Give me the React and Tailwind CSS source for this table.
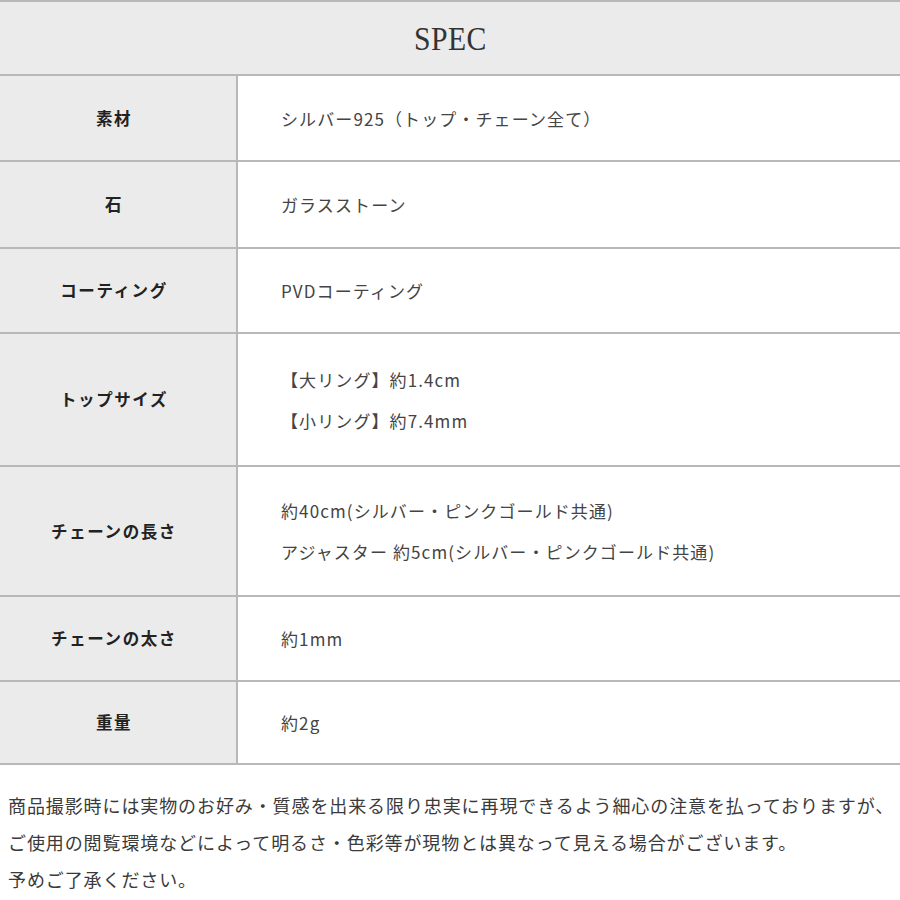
import React from 'react'

const specs = [
  { label: "素材", values: ["シルバー925（トップ・チェーン全て）"], h: "h-[86px]" },
  { label: "石", values: ["ガラスストーン"], h: "h-[87px]" },
  { label: "コーティング", values: ["PVDコーティング"], h: "h-[85px]" },
  { label: "トップサイズ", values: ["【大リング】約1.4cm", "【小リング】約7.4mm"], h: "h-[133px]" },
  { label: "チェーンの長さ", values: ["約40cm(シルバー・ピンクゴールド共通)", "アジャスター 約5cm(シルバー・ピンクゴールド共通)"], h: "h-[130px]" },
  { label: "チェーンの太さ", values: ["約1mm"], h: "h-[85px]" },
  { label: "重量", values: ["約2g"], h: "h-[83px]" },
]

const App = () => {
  return (
    <div className="w-[900px] h-[900px] bg-white overflow-hidden" style={{ fontFamily: '"Noto Sans CJK JP", "Noto Sans", sans-serif' }}>

      {/* HEADER */}
      <div className="h-[76px] bg-[#ebebeb] border-t-2 border-b-2 border-[#b8b8b8] flex items-center justify-center pt-[3px]">
        <h1 className="text-[33px] text-[#333] tracking-[0.5px] scale-x-90" style={{ fontFamily: '"Liberation Serif", serif' }}>
          SPEC
        </h1>
      </div>

      {/* TABLE */}
      <div className="flex flex-col">
        {specs.map((row) => (
          <div key={row.label} className={`flex border-b-2 border-[#b8b8b8] ${row.h}`}>
            <div className="w-[238px] shrink-0 bg-[#ebebeb] border-r-2 border-[#b8b8b8] flex items-center justify-center pr-[8px]">
              <span className="text-[16.5px] font-bold text-[#222] tracking-[1.6px]">{row.label}</span>
            </div>
            <div className="flex-1 flex flex-col justify-center pl-[43px] text-[17px] text-[#444] tracking-[1.1px] leading-[41px]">
              {row.values.map((v) => (
                <p key={v}>{v}</p>
              ))}
            </div>
          </div>
        ))}
      </div>

      {/* NOTE */}
      <div className="mt-[22px] pl-[8px] text-[18px] text-[#3a3a3a] tracking-[0.9px] leading-[37px]">
        <p>商品撮影時には実物のお好み・質感を出来る限り忠実に再現できるよう細心の注意を払っておりますが、</p>
        <p>ご使用の閲覧環境などによって明るさ・色彩等が現物とは異なって見える場合がございます。</p>
        <p>予めご了承ください。</p>
      </div>
    </div>
  )
}

export default App
